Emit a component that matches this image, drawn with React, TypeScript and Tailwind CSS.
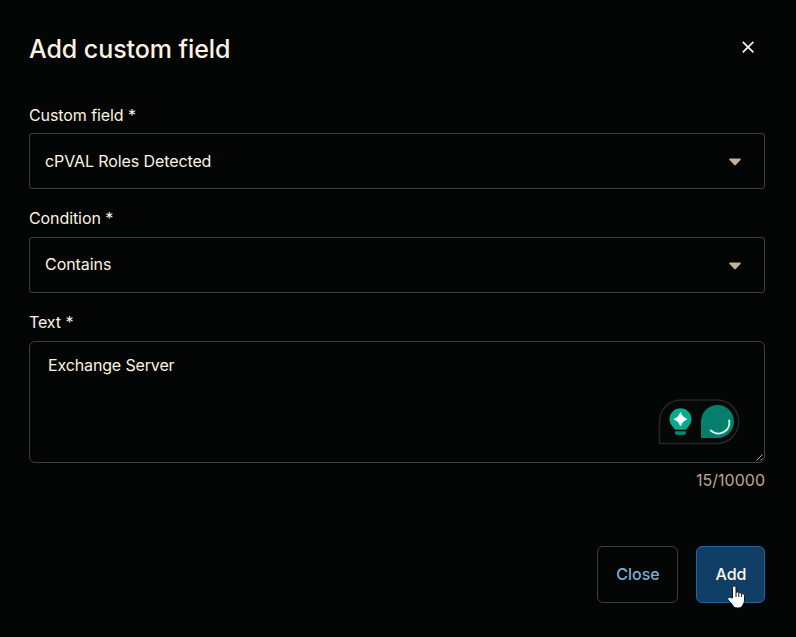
import type { ReactNode } from "react";

function Caret() {
  return (
    <svg className="relative top-px" width="12" height="8" viewBox="0 0 12 8" aria-hidden="true">
      <path d="M1 .5h10c.8 0 1 .8.5 1.400L7 6.800a1.400 1.400 0 0 1-2 0L.5 1.900C0 1.300.2.5 1 .5z" fill="#c4b09a" />
    </svg>
  );
}

function Label({ children }: { children: ReactNode }) {
  return <div className="h-6 text-base leading-6 tracking-[-0.09px]">{children}</div>;
}

function Select({ children }: { children: ReactNode }) {
  return (
    <div className="flex h-14 items-center justify-between rounded-[3px] border border-[#3d3e3d] pr-[23px] pl-[15px]">
      {children}
      <Caret />
    </div>
  );
}

function AssistantBadge() {
  return (
    <svg className="absolute top-[57px] right-[24px]" width="82" height="46" viewBox="0 0 82 46" aria-hidden="true">
      <path d="M1.500 44.500V22.500a21.500 21.500 0 0 1 21.500-21.500h36a21.750 21.750 0 0 1 0 43.500z" fill="#060807" stroke="#252726" strokeWidth="1.500" />
      <path d="M22.500 9.300a11 11 0 0 0-11 11c0 4 2 6.100 3.900 8.200.9 1.100 1.200 2.300 2.300 2.300h9.600c1.100 0 1.400-1.200 2.300-2.300 1.900-2.100 3.900-4.200 3.900-8.200A11 11 0 0 0 22.500 9.300z" fill="#08aa8c" />
      <path d="M17 32.300h11v1.200a2.500 2.500 0 0 1-2.500 2.500h-6a2.500 2.500 0 0 1-2.500-2.500z" fill="#07866f" />
      <path d="M22.500 13.500q1.500 5.200 6.500 6.700q-5 1.500-6.500 6.700q-1.500-5.200-6.500-6.700q5-1.500 6.500-6.700z" fill="#fff" stroke="#fff" strokeWidth=".7" />
      <path d="M43 39V22.500A16.500 16.500 0 1 1 59.500 39z" fill="#047f6d" />
      <path d="M71.200 21.500A11 11 0 0 1 52.800 31.500" fill="none" stroke="#d6f2ec" strokeWidth="2" strokeLinecap="round" />
    </svg>
  );
}

function HandCursor() {
  return (
    <svg className="absolute top-[38px] left-[30px]" width="19" height="24" viewBox="0 0 19 24" aria-hidden="true">
      <path d="M5.500 13V3c0-2.600 3.500-2.600 3.500 0v4.500c1-.8 2.500-.4 2.800.7 1-.7 2.500-.3 2.800.8 1.300-.5 2.900.1 2.900 1.700V15c0 3-1.500 4.200-2 5.500-.5 1.700-2.300 2.500-4.800 2.500-3.200 0-4.500-1.300-5.500-3.500L1 14.800c-1-1.800 1.500-3.500 3-2z" fill="#fff" stroke="#101722" strokeWidth="1" />
      <path d="M9 7.500V12M11.800 8.500V12M14.600 9.200V12" stroke="#101722" strokeWidth="1" />
    </svg>
  );
}

export default function App() {
  return (
    <main className="flex h-[637px] w-[796px] flex-col bg-[#040605] pt-[33px] pr-[31px] pl-[29px] font-['Inter','Liberation_Sans',sans-serif] text-[#fcf2e2]">
      <header className="flex h-8 items-start justify-between">
        <h1 className="text-[25px] leading-8 font-medium tracking-[-0.07px]">Add custom field</h1>
        <svg className="mt-[8px] mr-[11px]" width="12" height="12" viewBox="0 0 12 12" aria-hidden="true">
          <path d="M.8.8l10.600 10.600M11.400.8L.8 11.400" stroke="#fcf2e2" strokeWidth="1.700" />
        </svg>
      </header>
      <section className="mt-[38px] flex flex-col gap-1.5">
        <Label>Custom field *</Label>
        <Select>
          <span className="text-base leading-6 tracking-[-0.1px]">cPVAL Roles Detected</span>
        </Select>
      </section>
      <section className="mt-[17px] flex flex-col gap-[7px]">
        <Label>Condition *</Label>
        <Select>
          <span className="pb-0.5 text-base leading-6 tracking-[-0.05px]">Contains</span>
        </Select>
      </section>
      <section className="mt-[17px] flex flex-col gap-[7px]">
        <Label>Text *</Label>
        <div className="relative h-[122px] rounded-md border border-[#3d3e3d] px-[18px] py-[11px]">
          <span className="text-base leading-6 tracking-[-0.14px]">Exchange Server</span>
          <AssistantBadge />
          <svg className="absolute right-0 bottom-0" width="9" height="9" viewBox="0 0 9 9" aria-hidden="true">
            <path d="M1.500 7.500l6-6M5.500 7.500l2-2" stroke="#b5b5b5" strokeWidth="1" />
          </svg>
        </div>
      </section>
      <div className="mt-[5px] h-6 text-right text-base leading-6 text-[#bea78f]">15/10000</div>
      <footer className="mt-[54px] flex justify-end gap-[18px]">
        <button className="h-[57px] w-[81px] rounded-md border border-[#3d3e3d] pb-0.5 pl-px text-base leading-6 font-medium text-[#7eaed8]">Close</button>
        <button className="relative h-[57px] w-[69px] rounded-md border border-[#23649f] bg-[#113e66] pb-0.5 pl-px text-base leading-6 font-medium text-[#fff8ec]">
          Add
          <HandCursor />
        </button>
      </footer>
    </main>
  );
}
